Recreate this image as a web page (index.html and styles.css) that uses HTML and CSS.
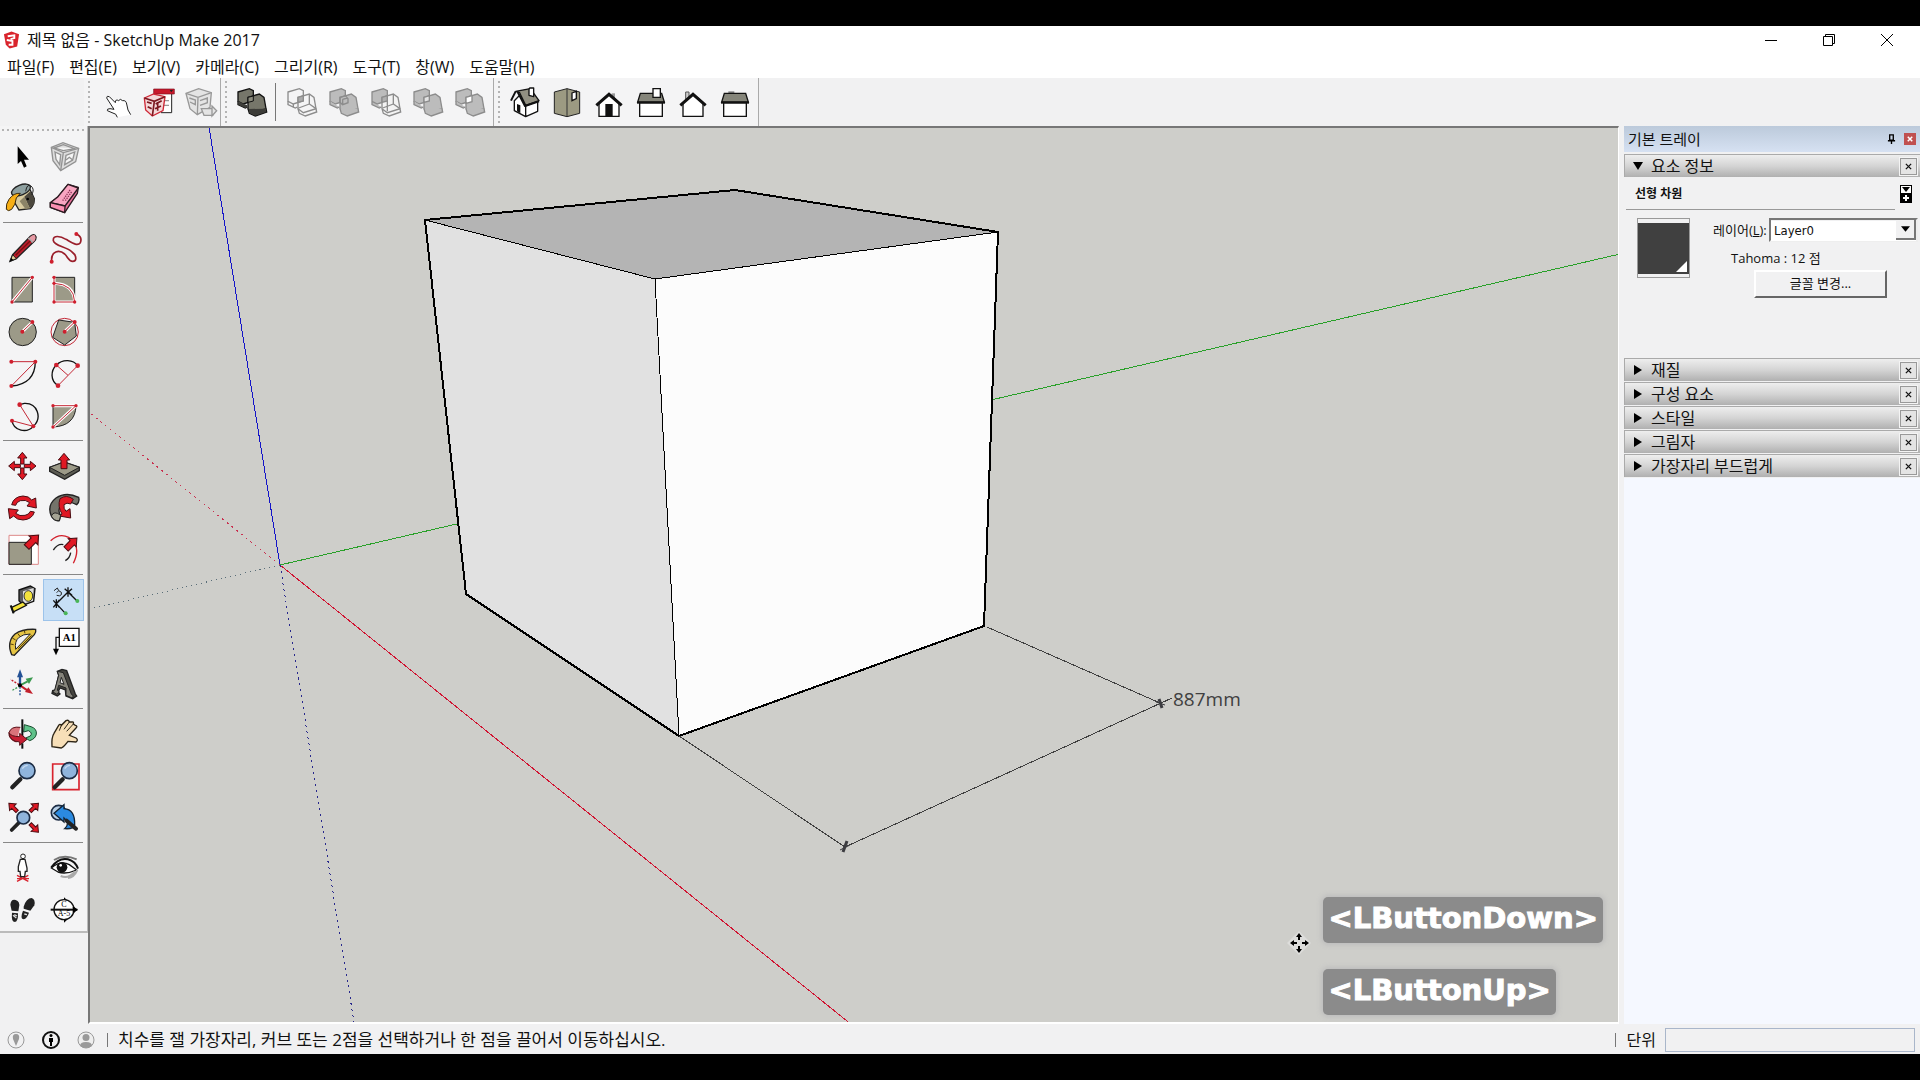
FILE: index.html
```html
<!DOCTYPE html>
<html lang="ko">
<head>
<meta charset="utf-8">
<title>제목 없음 - SketchUp Make 2017</title>
<link rel="stylesheet" href="styles.css">
</head>
<body>
<svg class="defs" aria-hidden="true">
  <defs>
    <path id="arrow-up" d="M0-26 L14-9 H5 V9 H-5 V-9 H-14Z"/>
    <path id="arrow-big" d="M0-28 L17-8 H9 V18 H-9 V-8 H-17Z"/>
    <g id="boxes">
      <path d="M12 24 L46 14 L58 20 V50 L28 60 L12 52Z"/>
      <path d="M12 52 V62 L34 72 L40 69"/>
      <path d="M42 40 L76 30 L90 40 L96 74 L58 86 L42 74Z"/>
      <path d="M42 74 L46 88 L64 96 L98 84 L96 74"/>
    </g>
    <g id="lens"><path class="k" d="M22 88 L46 64" stroke-width="13" stroke-linecap="round"/><circle cx="66" cy="38" r="24" fill="#8fb4dc" stroke="#1c2c44" stroke-width="5"/><path d="M52 32 Q58 22 68 22" stroke="#c5daf0" stroke-width="4" fill="none"/></g>
  </defs>
</svg>
<div class="app">
  <header class="titlebar">
    <svg class="logo" viewBox="0 0 18 20"><path d="M1 4 L9 1 L17 4 L15 17 L7 19 L3 15Z" fill="#d9242c"/><path d="M5 6 L12 5 V8 L8 9 M4 10 L10 11 V15 L6 15" stroke="#fff" stroke-width="2" fill="none"/></svg>
    <h1 class="title">제목 없음 - SketchUp Make 2017</h1>
    <div class="winbtns">
      <button aria-label="최소화"><svg viewBox="0 0 14 14"><path d="M1 7.500H13" /></svg></button>
      <button aria-label="이전 크기로"><svg viewBox="0 0 14 14"><path d="M1.500 3.500H10.500V12.500H1.500Z M3.500 3V1.500H12.500V10.500H11"/></svg></button>
      <button aria-label="닫기"><svg viewBox="0 0 14 14"><path d="M1 1L13 13M13 1L1 13"/></svg></button>
    </div>
  </header>
  <nav class="menubar">
    <button>파일(F)</button><button>편집(E)</button><button>보기(V)</button><button>카메라(C)</button><button>그리기(R)</button><button>도구(T)</button><button>창(W)</button><button>도움말(H)</button>
  </nav>
  <div class="toolbar">
    <div class="group group-narrow">
      <span class="grip"></span>
      <button class="tool" aria-label="상호 작용"><svg viewBox="0 0 108 108"><path d="M52 100 Q50 88 36 86 L22 80 Q20 74 30 74 L42 76 L20 42 Q20 34 28 38 L46 56 Q46 44 56 50 Q60 42 68 50 Q78 48 80 60 L84 78 L92 92" fill="#fff" stroke="#222" stroke-width="3"/></svg></button>
      <button class="tool" aria-label="구성 요소 옵션"><svg viewBox="0 0 108 108"><path d="M48 26H92V86H60" fill="#fff" stroke="#222" stroke-width="3"/><path d="M38 15H100V30H38Z" fill="#c9182b" stroke="#7d1020" stroke-width="2"/><path d="M86 18L96 18L91 25Z" fill="#222"/><path d="M60 50H84M60 64H84" stroke="#999" stroke-width="4"/><path d="M10 42L38 30L72 38L66 80L34 96L14 78Z" fill="#f4d9da" stroke="#cf2736" stroke-width="4"/><path d="M10 42L40 52L72 38M40 52L34 96M18 54L32 58M20 68L32 74M44 60L62 50M42 74L60 66M50 54V80" stroke="#7c1820" stroke-width="5" fill="none"/></svg></button>
      <button class="tool" aria-label="구성 요소 특성"><svg viewBox="0 0 108 108"><g fill="#e4e4e4" stroke="#989898" stroke-width="4"><path d="M12 28L50 14L88 26L84 70L46 92L24 74Z"/><path d="M12 28L48 40L88 26M48 40L46 92M22 42L40 48V62L24 54M54 50L76 42V56L54 64M58 74H92V94H66Z" /><path d="M90 66L104 80L90 96Z"/></g></svg></button>
    </div>
    <div class="group">
      <span class="grip"></span>
      <button class="tool" aria-label="외부 쉘"><svg viewBox="0 0 108 108"><use href="#boxes" fill="#76766a" stroke="#111" stroke-width="4"/><path d="M44 75L94 74L97 84L64 95L47 87ZM13 53L40 64V70L34 72L13 62Z" fill="#3c3c38"/><path d="M42 40L58 36V51L42 55Z" fill="#8a8a7c" stroke="#111" stroke-width="3"/></svg></button>
      <span class="vline"></span>
      <button class="tool gray" aria-label="교차"><svg viewBox="0 0 108 108"><use href="#boxes" fill="none"/><path d="M42 40L58 35V51L42 55Z" fill="#aaa"/><path d="M28 60V70M76 30V60L96 74M76 60L44 72"/></svg></button>
      <button class="tool gray" aria-label="합집합"><svg viewBox="0 0 108 108"><use href="#boxes" fill="#bcbcbc"/><path d="M42 40L58 35L66 44V56L50 62L42 55Z M50 46L64 42M50 46V60"/></svg></button>
      <button class="tool gray" aria-label="빼기"><svg viewBox="0 0 108 108"><path d="M12 24L46 14L58 20V50L28 60L12 52Z M12 52V62L34 72L40 69" fill="#bcbcbc"/><path d="M42 40L76 30L90 40L96 74L58 86L42 74Z M42 74L46 88L64 96L98 84L96 74" fill="#f3f3f3"/><path d="M42 40L58 35V51L42 55Z" fill="#b0b0b0"/><path d="M76 30V60L96 74M76 60L44 72M58 50V82"/></svg></button>
      <button class="tool gray" aria-label="자르기"><svg viewBox="0 0 108 108"><use href="#boxes" fill="#bcbcbc"/><path d="M42 40L58 35V51L42 55Z" fill="#e4e4e4"/></svg></button>
      <button class="tool gray" aria-label="분할"><svg viewBox="0 0 108 108"><use href="#boxes" fill="#bcbcbc"/><path d="M42 40L60 35V53L42 58Z" fill="#fff"/></svg></button>
    </div>
    <div class="group">
      <span class="grip"></span>
      <button class="tool" aria-label="등각 투영"><svg viewBox="0 0 108 108"><g stroke="#111" stroke-width="4" stroke-linejoin="round"><path d="M22 50L38 34L56 66V98L22 80Z M56 66L92 52V82L56 98" fill="#fff"/><path d="M26 22L70 14L96 50L56 64L38 26Z" fill="#929082"/><path d="M26 22L12 50M32 24L54 66L96 52" fill="none" stroke-width="6"/><path d="M66 16V34L80 38V12L68 12Z" fill="#fff"/></g><path d="M30 60L40 64V88L30 82Z" fill="#111"/></svg></button>
      <button class="tool" aria-label="맨 위"><svg viewBox="0 0 108 108"><path d="M16 24L54 14L92 24V88L54 98L16 88Z" fill="#9c9a82" stroke="#222" stroke-width="3"/><path d="M54 14V98" stroke="#333" stroke-width="3"/><path d="M69 27L82 22V44L69 50Z" fill="#fff" stroke="#111" stroke-width="4"/></svg></button>
      <button class="tool" aria-label="앞"><svg viewBox="0 0 108 108"><path d="M62 28L72 28V44H62Z" fill="#999"/><path d="M24 56L54 30L84 56V97H24Z" fill="#fff" stroke="#111" stroke-width="4"/><path d="M16 64L54 31L92 64" stroke="#111" stroke-width="9" fill="none"/><path d="M43 60H65V97H43Z" fill="#111"/></svg></button>
      <button class="tool" aria-label="오른쪽"><svg viewBox="0 0 108 108"><path d="M20 56H88V97H20Z" fill="#fff" stroke="#111" stroke-width="4"/><path d="M22 28H86L94 54H14Z" fill="#85857a" stroke="#111" stroke-width="4"/><path d="M12 56H96" stroke="#111" stroke-width="6"/><path d="M60 14H82V40H60Z" fill="#fff" stroke="#111" stroke-width="4"/></svg></button>
      <button class="tool" aria-label="뒤"><svg viewBox="0 0 108 108"><path d="M32 24H42V46H32Z" fill="#ccc" stroke="#555" stroke-width="3"/><path d="M24 56L54 30L84 56V97H24Z" fill="#fff" stroke="#111" stroke-width="4"/><path d="M16 64L54 31L92 64" stroke="#111" stroke-width="9" fill="none"/></svg></button>
      <button class="tool" aria-label="왼쪽"><svg viewBox="0 0 108 108"><path d="M34 22H52V30H34Z" fill="#888"/><path d="M20 56H88V97H20Z" fill="#fff" stroke="#111" stroke-width="4"/><path d="M22 28H86L94 54H14Z" fill="#85857a" stroke="#111" stroke-width="4"/><path d="M12 56H96" stroke="#111" stroke-width="6"/></svg></button>
    </div>
  </div>
  <main class="main">
    <aside class="side">
      <div class="palette">
        <span class="grip-h"></span>
        <div class="cells">
          <button class="tool" aria-label="선택"><svg viewBox="0 0 108 108"><path d="M38 25V78L48 69L57 89L65 85L57 65H72Z"/></svg></button>
          <button class="tool" aria-label="구성 요소 만들기"><svg viewBox="0 0 108 108"><g fill="none" stroke="#929292" stroke-width="4"><path d="M16 28L51 14L98 31L89 71L44 98L21 68Z" fill="#ddd"/><path d="M16 28L52 44L98 31M52 44L44 98M27 42L44 50L41 80L30 64ZM60 52L86 42L80 66L56 80Z" fill="#f5f5f5"/><path d="M24 30L52 20L86 32L52 38ZM60 66L70 58L80 66" /></g></svg></button>
          <button class="tool" aria-label="페인트통"><svg viewBox="0 0 108 108"><path d="M26 36L70 18L88 56Q88 74 76 86L42 90L28 66Z" fill="#d8cba0" stroke="#222" stroke-width="4"/><path d="M58 50L74 84L88 72V56L76 34Z" fill="#4b473d"/><path d="M44 64L58 50L74 84L62 88Z" fill="#8b8367"/><ellipse cx="48" cy="30" rx="30" ry="15" transform="rotate(-22 48 30)" fill="#8ea0a0" stroke="#222" stroke-width="4"/><path d="M46 40Q26 38 12 58Q2 72 4 88Q10 96 20 88Q32 74 34 54Z" fill="#f7af16" stroke="#3a2a10" stroke-width="3"/><path d="M62 34Q66 10 78 18Q90 28 80 44" fill="none" stroke="#222" stroke-width="3"/><circle cx="68" cy="57" r="4"/></svg></button>
          <button class="tool" aria-label="지우개"><svg viewBox="0 0 108 108"><g stroke="#2b1a20" stroke-width="4" stroke-linejoin="round"><path d="M13 68L36 50L66 13L97 22L94 40L56 98L13 82Z" fill="#e8709a"/><path d="M13 68L57 78L97 24L66 13L36 50Z" fill="#f8a5c1"/><path d="M13 68L57 78L56 98L13 82Z" fill="#fb8fb2"/></g><path d="M50 62L72 30M58 62L78 34" stroke="#8c3456" stroke-width="4" stroke-dasharray="4 3"/></svg></button>
        </div>
        <hr>
        <div class="cells">
          <button class="tool" aria-label="선"><svg viewBox="0 0 108 108"><path d="M15 94L23 74L76 19Q88 8 93 20Q94 28 88 34L34 86Z" fill="#be1e2d" stroke="#222" stroke-width="4"/><path d="M15 94L23 74L34 86Z" fill="#e8d29c" stroke="#222" stroke-width="3"/><path d="M15 94L19 84L25 90Z"/><path d="M70 26L82 38L89 32Q94 24 90 16Q84 12 76 20Z" fill="#e69aa4"/><path d="M70 24L83 37" stroke="#aaa" stroke-width="5"/><path d="M32 76L76 32" stroke="#711" stroke-width="4"/></svg></button>
          <button class="tool" aria-label="자유형"><svg viewBox="0 0 108 108"><path d="M17 95C14 62 40 58 56 72C66 82 68 94 80 94C92 94 94 78 78 66C62 50 24 48 22 32C20 14 44 18 60 28C78 38 94 50 103 38C108 26 104 18 91 12" fill="none" stroke="#9a1f2b" stroke-width="5"/><circle class="r" cx="17" cy="95" r="6"/><circle class="r" cx="91" cy="12" r="6"/></svg></button>
          <button class="tool" aria-label="사각형"><svg viewBox="0 0 108 108"><path class="face" d="M21 16H82V90H21Z"/><path class="halo" d="M21 90L82 16"/><path class="rl" d="M21 90L82 16"/><circle class="r" cx="21" cy="90" r="5"/><circle class="r" cx="82" cy="16" r="5"/></svg></button>
          <button class="tool" aria-label="회전 사각형"><svg viewBox="0 0 108 108"><path class="face" d="M24 16H86V90H24Z"/><path class="halo" d="M24 16V90H86Q84 36 24 34"/><path class="rl" d="M24 16V90H86Q84 36 24 34"/><circle class="r" cx="24" cy="16" r="5"/><circle class="r" cx="24" cy="34" r="5"/><circle class="r" cx="24" cy="90" r="5"/><circle class="r" cx="86" cy="90" r="5"/></svg></button>
          <button class="tool" aria-label="원"><svg viewBox="0 0 108 108"><circle class="face" cx="53" cy="54" r="41"/><path class="halo" d="M52 53L82 24"/><path class="rl" d="M52 53L82 24"/><circle class="r" cx="52" cy="53" r="6"/><circle class="r" cx="82" cy="24" r="6"/></svg></button>
          <button class="tool" aria-label="다각형"><svg viewBox="0 0 108 108"><circle class="rl" cx="56" cy="54" r="41"/><path class="face" d="M86 25L91 66L56 93L20 70L38 18Z"/><path class="halo" d="M56 53L86 24"/><path class="rl" d="M56 53L86 24"/><circle class="r" cx="56" cy="53" r="6"/><circle class="r" cx="86" cy="24" r="6"/></svg></button>
          <button class="tool" aria-label="호"><svg viewBox="0 0 108 108"><path class="kl" d="M91 17Q90 84 19 90"/><path class="rl" d="M19 17H91L19 90"/><circle class="r" cx="19" cy="17" r="6"/><circle class="r" cx="91" cy="17" r="6"/><circle class="r" cx="19" cy="90" r="6"/></svg></button>
          <button class="tool" aria-label="2점 호"><svg viewBox="0 0 108 108"><path class="kl" d="M36 89C12 74 14 44 31 27C50 8 82 10 95 29"/><path class="rl" d="M36 89L95 29M31 27L66 58" stroke-width="5"/><circle class="r" cx="31" cy="27" r="7"/><circle class="r" cx="95" cy="29" r="7"/><circle class="r" cx="36" cy="89" r="7"/></svg></button>
          <button class="tool" aria-label="3점 호"><svg viewBox="0 0 108 108"><path class="kl" d="M21 68C26 100 66 106 85 85C112 60 98 14 58 16L44 20"/><path class="rl" d="M44 20L85 85L21 68" stroke-width="5"/><circle class="r" cx="44" cy="20" r="7"/><circle class="r" cx="21" cy="68" r="6"/><circle class="r" cx="85" cy="85" r="6"/></svg></button>
          <button class="tool" aria-label="파이"><svg viewBox="0 0 108 108"><path class="face" d="M21 23H90Q88 84 21 87Z"/><path class="halo" d="M21 23H90L21 87"/><path class="rl" d="M21 23H90L21 87"/><circle class="r" cx="21" cy="23" r="5"/><circle class="r" cx="90" cy="23" r="5"/><circle class="r" cx="21" cy="87" r="5"/></svg></button>
        </div>
        <hr>
        <div class="cells">
          <button class="tool" aria-label="이동"><svg viewBox="0 0 108 108"><g class="ra"><use href="#arrow-up" transform="translate(52 39)"/><use href="#arrow-up" transform="translate(52 69) rotate(180)"/><use href="#arrow-up" transform="translate(37 54) rotate(-90)"/><use href="#arrow-up" transform="translate(67 54) rotate(90)"/></g></svg></button>
          <button class="tool" aria-label="밀기/끌기"><svg viewBox="0 0 108 108"><path d="M11 58L54 42L100 58V68L56 94L11 70Z" fill="#5b5b52" stroke="#222" stroke-width="4"/><path d="M11 58L54 42L100 58L56 82Z" fill="#9c9a88" stroke="#222" stroke-width="3"/><g class="ra"><use href="#arrow-big" transform="translate(54 44)"/></g></svg></button>
          <button class="tool" aria-label="회전"><svg viewBox="0 0 108 108"><g class="ra"><path d="M20 44Q26 20 54 18Q72 18 80 30L92 24L94 54L66 48L74 38Q62 28 46 32Q34 36 32 46Z"/><path d="M88 66Q82 88 54 90Q36 90 26 78L14 86L10 56L40 60L32 70Q44 80 60 76Q72 74 76 64Z"/></g></svg></button>
          <button class="tool" aria-label="따라가기"><svg viewBox="0 0 108 108"><path d="M98 22Q60 4 30 24Q2 46 16 78Q24 94 40 92L44 76Q34 64 44 46Q62 28 92 44Q102 36 98 22Z" fill="#74736a" stroke="#222" stroke-width="4"/><g class="ra"><path d="M42 26Q62 12 82 28L74 42Q62 36 54 44Q52 56 60 64L72 56L74 84L40 78L48 72Q34 50 42 26Z"/></g><path d="M16 78Q24 60 44 76L40 92Q24 94 16 78Z" fill="#a5a494" stroke="#222" stroke-width="3"/></svg></button>
          <button class="tool" aria-label="배율"><svg viewBox="0 0 108 108"><path d="M12 10H100V97H12Z" fill="#fff" stroke="#d88" stroke-width="3"/><path d="M12 31H79V97H12Z" fill="#9c9a88" stroke="#222" stroke-width="3"/><g class="ra"><use href="#arrow-big" transform="translate(79 31) rotate(45) scale(1.100)"/></g></svg></button>
          <button class="tool" aria-label="오프셋"><svg viewBox="0 0 108 108"><path d="M14 26Q40 2 68 16Q108 40 82 94" fill="none" stroke="#d3202c" stroke-width="4"/><path d="M22 54Q36 34 52 38M74 62Q72 78 58 86" fill="none" stroke="#222" stroke-width="4"/><g class="ra"><use href="#arrow-big" transform="translate(73 38) rotate(45)"/></g></svg></button>
        </div>
        <hr>
        <div class="cells">
          <button class="tool" aria-label="줄자 도구"><svg viewBox="0 0 108 108"><path d="M42 24L76 12L90 20L86 58L54 70L42 56Z" fill="#5c5c5c" stroke="#111" stroke-width="4"/><path d="M54 28L86 18L84 56L54 66Z" fill="#ddd"/><ellipse cx="70" cy="42" rx="13" ry="16" fill="#f4e33c" stroke="#333" stroke-width="3"/><path d="M54 60L20 76L24 90L64 70Z" fill="#f4e33c" stroke="#111" stroke-width="4"/><path d="M17 70L26 94" stroke="#111" stroke-width="6"/></svg></button>
          <button class="tool active" aria-label="치수"><svg viewBox="0 0 108 108"><path d="M31 65L66 30M22 55L40 76M22 76L40 54M31 52V78M56 20L78 40M56 40L78 20M66 16V44M31 65L58 94M66 30L94 58" stroke="#111" stroke-width="4" fill="none"/><path d="M24 26L34 18L38 26L32 32M38 26Q50 30 46 38Q42 44 32 40" stroke="#222" stroke-width="3" fill="none"/><circle cx="59" cy="94" r="6" fill="#49b556"/><circle cx="94" cy="57" r="6" fill="#49b556"/></svg></button>
          <button class="tool" aria-label="각도기"><svg viewBox="0 0 108 108"><path d="M20 92Q4 54 30 30Q52 14 92 16Q94 24 88 32L28 94Z" fill="#e5c443" stroke="#222" stroke-width="4"/><path d="M32 76Q28 52 42 40Q54 30 76 30Z" fill="#f3f3f3" stroke="#222" stroke-width="3"/><path d="M16 60L26 62M22 42L32 48M38 28L44 36M58 20L60 28M40 74L80 34" stroke="#553f08" stroke-width="3"/></svg></button>
          <button class="tool" aria-label="텍스트"><svg viewBox="0 0 108 108"><path d="M40 13H99V67H40Z" fill="#fff" stroke="#111" stroke-width="4"/><path d="M40 40H30V76" fill="none" stroke="#111" stroke-width="4"/><path d="M21 74H39L30 94Z"/><text x="70" y="51" text-anchor="middle" class="t-a1">A1</text></svg></button>
          <button class="tool" aria-label="축"><svg viewBox="0 0 108 108"><path d="M45 56V30" stroke="#245296" stroke-width="7"/><path d="M45 10L54 34H36Z" fill="#245296"/><path d="M45 58L68 46" stroke="#3c9a50" stroke-width="6"/><path d="M84 34L72 54L62 38Z" fill="#3c9a50"/><path d="M45 58L68 74" stroke="#c2202c" stroke-width="6"/><path d="M84 84L60 78L70 64Z" fill="#c2202c"/><path d="M45 62V92" stroke="#245296" stroke-width="4" stroke-dasharray="6 4"/><path d="M45 60L20 74" stroke="#3c9a50" stroke-width="4" stroke-dasharray="6 4"/><path d="M42 56L16 40" stroke="#c2202c" stroke-width="4" stroke-dasharray="6 4"/><circle cx="45" cy="58" r="6"/></svg></button>
          <button class="tool" aria-label="3D 텍스트"><svg viewBox="0 0 108 108"><path d="M34 16L48 10L62 14L88 84L92 90L80 98L60 90L58 72L42 66L36 78L42 84L34 90L18 82L20 74L28 72L38 28Z" fill="#45443f" stroke="#222" stroke-width="4"/><path d="M34 16L52 20L76 84L82 90L78 96L60 88L60 66L38 58L34 72L40 78L32 84L20 78L26 72L38 28Z" fill="#85837a" stroke="#222" stroke-width="3"/><path d="M46 34L42 50L54 55Z" fill="#f3f3f3" stroke="#222" stroke-width="3"/></svg></button>
        </div>
        <hr>
        <div class="cells">
          <button class="tool" aria-label="궤도"><svg viewBox="0 0 108 108"><path d="M46 34Q18 30 12 50Q10 70 34 78" fill="#d9737a" stroke="#5a1119" stroke-width="3"/><path d="M58 26L78 32Q96 38 94 54Q92 68 74 74L62 66L76 60Q84 50 70 44L56 48Z" fill="#5fc28a" stroke="#164a2c" stroke-width="3"/><path d="M52 10V60" stroke="#111" stroke-width="6"/><path d="M12 50Q18 62 44 62V52L66 70L44 88V78Q14 76 12 50Z" fill="#c61f33" stroke="#5a1119" stroke-width="3"/><path d="M52 82V98" stroke="#111" stroke-width="6"/></svg></button>
          <button class="tool" aria-label="이동 보기"><svg viewBox="0 0 108 108"><path d="M18 92Q16 64 24 52L38 28Q42 22 46 28L60 14Q68 10 70 18L78 18Q84 16 82 24L88 28Q96 30 90 36L70 58L90 66Q98 72 90 78L66 76Q54 92 46 96Z" fill="#f7dfb8" stroke="#2c2416" stroke-width="4"/><path d="M46 28L40 44M70 18L54 40M82 24L62 46" stroke="#2c2416" stroke-width="3" fill="none"/></svg></button>
          <button class="tool" aria-label="확대/축소"><svg viewBox="0 0 108 108"><use href="#lens"/></svg></button>
          <button class="tool" aria-label="창 확대/축소"><svg viewBox="0 0 108 108"><path d="M20 18H99V95H20Z" fill="none" stroke="#d8232e" stroke-width="5"/><use href="#lens" x="4"/></svg></button>
          <button class="tool" aria-label="범위 확대/축소"><svg viewBox="0 0 108 108"><g class="ra"><use href="#arrow-up" transform="translate(30 28) rotate(-45)"/><use href="#arrow-up" transform="translate(82 28) rotate(45)"/><use href="#arrow-up" transform="translate(82 78) rotate(135)"/></g><path d="M20 90L42 68" stroke="#222" stroke-width="11" stroke-linecap="round"/><circle cx="55" cy="53" r="19" fill="#8fb4dc" stroke="#1c2c44" stroke-width="5"/></svg></button>
          <button class="tool" aria-label="이전"><svg viewBox="0 0 108 108"><circle cx="38" cy="38" r="22" fill="#b7cfe6" stroke="#1c2c44" stroke-width="5"/><path d="M24 40L54 14V26Q88 28 86 76Q82 88 56 86Q74 70 54 54V66Z" fill="#2b8ae0" stroke="#123" stroke-width="4"/><path d="M62 62L90 86" stroke="#222" stroke-width="12" stroke-linecap="round"/></svg></button>
        </div>
        <hr>
        <div class="cells">
          <button class="tool" aria-label="카메라 배치"><svg viewBox="0 0 108 108"><path d="M36 94L70 76M36 76L70 94M36 86H72" stroke="#d8232e" stroke-width="4"/><circle cx="54" cy="19" r="7" fill="#fff" stroke="#222" stroke-width="3"/><path d="M46 28H60L66 54V64H61L59 80H47L45 64H40V50Z" fill="#fff" stroke="#222" stroke-width="4"/></svg></button>
          <button class="tool" aria-label="둘러보기"><svg viewBox="0 0 108 108"><path d="M16 52Q38 22 66 28Q88 34 96 56" fill="none" stroke="#111" stroke-width="6"/><path d="M24 30Q54 12 92 28" fill="none" stroke="#777" stroke-width="6"/><path d="M16 54Q44 30 70 44L92 60Q60 74 36 66Z" fill="#fff" stroke="#111" stroke-width="4"/><circle cx="48" cy="52" r="16" fill="#111"/><circle cx="44" cy="46" r="4" fill="#fff"/><path d="M44 78Q66 88 86 66M66 84Q84 82 94 60" fill="none" stroke="#aaa" stroke-width="6"/></svg></button>
          <button class="tool" aria-label="보행"><svg viewBox="0 0 108 108"><g fill="#222"><path d="M16 38Q18 20 32 24Q46 28 42 46L40 58L20 56Z"/><path d="M21 62L39 64Q40 88 30 90Q18 90 21 62Z"/><path d="M56 44Q64 18 80 18Q92 22 88 40L76 56L56 50Z"/><path d="M54 56L72 62Q66 80 56 82Q44 80 54 56Z"/></g><path d="M24 70L34 78M28 68L36 72M58 66L66 68" stroke="#ddd" stroke-width="4"/></svg></button>
          <button class="tool" aria-label="단면"><svg viewBox="0 0 108 108"><path d="M54 16L94 53L54 92Z"/><circle cx="54" cy="53" r="30" fill="#fff" stroke="#111" stroke-width="4"/><path d="M14 53H94" stroke="#111" stroke-width="6"/><path d="M80 44L96 53L80 62Z"/><text x="54" y="46" text-anchor="middle" class="t-sec">C</text><text x="54" y="73" text-anchor="middle" class="t-sec">A-5</text></svg></button>
        </div>
      </div>
    </aside>
    <section class="viewport">
      <svg class="scene" viewBox="90 128 1528 894" preserveAspectRatio="xMidYMid slice">
        <g shape-rendering="crispEdges" fill="none">
          <path d="M209 127L280 565" stroke="#1414c8"/>
          <path d="M280 565L1620 254" stroke="#28a028"/>
          <path d="M280 565L852 1025" stroke="#d01432"/>
          <path d="M280 565L90 413" stroke="#c83250" stroke-dasharray="2 4"/>
          <path d="M280 565L90 609" stroke="#5a6e78" stroke-dasharray="1 4"/>
          <path d="M280 565L354 1022" stroke="#28288c" stroke-dasharray="2 4"/>
          <path d="M425 220L655 279L679 736L465 594Z" fill="#e1e1e1"/>
          <path d="M655 279L998 232L983 626L679 736Z" fill="#fcfcfc"/>
          <path d="M425 220L735 190L998 232L655 279Z" fill="#b4b4b4"/>
          <path d="M425 220L655 279L998 232M655 279L679 736" stroke="#000"/>
          <path d="M425 220L735 190L998 232L984 626L679 736L466 594Z" stroke="#000" stroke-width="2" stroke-linejoin="round"/>
          <path d="M987 627L1160 703M1172 698L845 847L679 736" stroke="#404040"/>
        </g>
        <path d="M1159 699L1162 708M847 841L843 852" stroke="#3c3c40" stroke-width="3"/>
        <path d="M1156 702L1165 705M840 850L850 845" stroke="#3c3c40" stroke-width="1"/>
        <text x="1173" y="706" class="dim">887mm</text>
        <g><path d="M1299 931L1311 943L1299 955L1287 943Z" fill="#f4f4f4" opacity=".4"/><path d="M1299 933L1302 937H1300V940H1298V937H1296ZM1299 953L1302 949H1300V946H1298V949H1296ZM1290 943L1294 940V942H1297V944H1294V946ZM1309 943L1305 940V942H1302V944H1305V946Z"/></g>
      </svg>
      <div class="keys"><kbd>&lt;LButtonDown&gt;</kbd><kbd>&lt;LButtonUp&gt;</kbd></div>
    </section>
    <aside class="tray">
      <div class="tray-head"><h2>기본 트레이</h2>
        <button class="pin" aria-label="고정"><svg viewBox="0 0 10 12"><path d="M3 1H7V7H3ZM1 7.500H9M5 8V12M7 1V7" fill="none" stroke="#000" stroke-width="1.500"/></svg></button>
        <button class="close-red" aria-label="트레이 닫기"><svg viewBox="0 0 8 8"><path d="M1 1L7 7M7 1L1 7" stroke="#fff" stroke-width="2"/></svg></button>
      </div>
      <div class="sec"><svg class="tri" viewBox="0 0 10 10"><path d="M0 1H10L5 9Z"/></svg><h3>요소 정보</h3><button class="x" aria-label="닫기"><svg viewBox="0 0 8 8"><path d="M1 1L7 7M7 1L1 7"/></svg></button></div>
      <div class="info">
        <div class="info-head"><h4>선형 차원</h4><button class="detail" aria-label="세부 정보"><svg viewBox="0 0 12 18"><path d="M0 0H12V18H0Z"/><path d="M1 1H11V8H1Z" fill="#fff"/><path d="M2 2H10L6 7Z"/><path d="M6 10V16M3 13H9" stroke="#fff" stroke-width="2"/></svg></button></div>
        <div class="info-body">
          <button class="swatch" aria-label="재질"><svg viewBox="0 0 51 51"><path d="M0 0H51V51H0Z" fill="#404040"/><path d="M49 38V49H38Z" fill="#fff"/></svg></button>
          <div class="fields">
            <div class="layer"><label for="layer">레이어(<u>L</u>):</label>
              <div class="combo"><select id="layer"><option>Layer0</option></select><span class="drop"><svg viewBox="0 0 10 6"><path d="M0 0H10L5 6Z"/></svg></span></div></div>
            <p class="font">Tahoma : 12 점</p>
            <button class="change">글꼴 변경...</button>
          </div>
        </div>
      </div>
      <div class="sec"><svg class="tri" viewBox="0 0 10 10"><path d="M1 0V10L9 5Z"/></svg><h3>재질</h3><button class="x" aria-label="닫기"><svg viewBox="0 0 8 8"><path d="M1 1L7 7M7 1L1 7"/></svg></button></div>
      <div class="sec"><svg class="tri" viewBox="0 0 10 10"><path d="M1 0V10L9 5Z"/></svg><h3>구성 요소</h3><button class="x" aria-label="닫기"><svg viewBox="0 0 8 8"><path d="M1 1L7 7M7 1L1 7"/></svg></button></div>
      <div class="sec"><svg class="tri" viewBox="0 0 10 10"><path d="M1 0V10L9 5Z"/></svg><h3>스타일</h3><button class="x" aria-label="닫기"><svg viewBox="0 0 8 8"><path d="M1 1L7 7M7 1L1 7"/></svg></button></div>
      <div class="sec"><svg class="tri" viewBox="0 0 10 10"><path d="M1 0V10L9 5Z"/></svg><h3>그림자</h3><button class="x" aria-label="닫기"><svg viewBox="0 0 8 8"><path d="M1 1L7 7M7 1L1 7"/></svg></button></div>
      <div class="sec"><svg class="tri" viewBox="0 0 10 10"><path d="M1 0V10L9 5Z"/></svg><h3>가장자리 부드럽게</h3><button class="x" aria-label="닫기"><svg viewBox="0 0 8 8"><path d="M1 1L7 7M7 1L1 7"/></svg></button></div>
      <div class="tray-rest"></div>
    </aside>
  </main>
  <footer class="status">
    <button aria-label="지리적 위치"><svg viewBox="0 0 18 18"><circle cx="9" cy="9" r="8" fill="none" stroke="#999"/><path d="M9 15L6 8Q5 3 9 3Q13 3 12 8Z" fill="#999"/></svg></button>
    <button aria-label="크레딧"><svg viewBox="0 0 18 18"><circle cx="9" cy="9" r="8" fill="none" stroke="#111" stroke-width="2"/><circle cx="9" cy="4.500" r="1.500"/><path d="M7 7H11V11H10V15H8V11H7Z"/></svg></button>
    <button aria-label="로그인"><svg viewBox="0 0 18 18"><circle cx="9" cy="9" r="8" fill="#eee" stroke="#999"/><circle cx="9" cy="6.500" r="3.500" fill="#999"/><path d="M3 15Q3 11 9 11Q15 11 15 15Q9 19 3 15Z" fill="#999"/></svg></button>
    <span class="bar"></span>
    <p class="hint">치수를 잴 가장자리, 커브 또는 2점을 선택하거나 한 점을 끌어서 이동하십시오.</p>
    <span class="bar"></span>
    <label for="unit">단위</label>
    <input id="unit" type="text">
  </footer>
</div>
</body>
</html>
```
FILE: styles.css
```css
* { box-sizing: border-box; }
body {
  margin: 0;
  min-height: 100vh;
  padding: 26px 0;
  display: flex;
  background: #000;
  color: #111;
  font: 16px/20px "Open Sans", "Noto Sans CJK KR", sans-serif;
}
h1, h2, h3, h4, p { margin: 0; font-weight: 400; font-size: 16px; }
button { border: 0; padding: 0; background: none; font: inherit; color: inherit; }
svg { display: block; }
.defs { position: absolute; width: 0; height: 0; }
.app { flex: 1; min-width: 0; display: flex; flex-direction: column; background: #f1f1f2; }

.titlebar { height: 28px; display: flex; align-items: center; background: #fff; padding-left: 3px; }
.logo { width: 17px; height: 20px; margin-right: 7px; }
.title { flex: 1; font-size: 16px; }
.winbtns { display: flex; padding-right: 4px; }
.winbtns button { width: 58px; height: 28px; display: grid; place-items: center; }
.winbtns svg { width: 14px; height: 14px; fill: none; stroke: #000; }

.menubar { height: 24px; display: flex; align-items: flex-end; gap: 15px; padding-left: 7px; background: #fff; font-size: 16px; }
.menubar button { line-height: 22px; white-space: nowrap; }

.toolbar { height: 48px; display: flex; padding-left: 84px; background: #f1f1f2; }
.group { display: flex; align-items: center; border-right: 1px solid #aaa; padding-right: 2px; background: #f4f4f5; }
.group-narrow { padding-right: 0; }
.grip { width: 2px; height: 42px; margin: 0 4px; background: repeating-linear-gradient(#b4b4b4 0 2px, transparent 2px 5px); }
.group-narrow .grip { margin-right: 7px; }
.tool { width: 42px; height: 42px; display: grid; place-items: center; }
.group-narrow .tool { width: 41px; }
.tool svg { width: 36px; height: 36px; }
.vline { width: 1px; height: 38px; margin: 0 5px 0 2px; background: #777; }
.gray svg { fill: none; stroke: #8c8c8c; stroke-width: 4px; }

.main { flex: 1; min-height: 0; display: flex; }
.side { width: 88px; flex: none; }
.palette { padding: 3px 3px 0 2px; border-right: 1px solid #bbb; border-bottom: 2px solid #bbb; background: #f4f4f5; }
.grip-h { display: block; height: 2px; margin-bottom: 4px; background: repeating-linear-gradient(90deg, #b4b4b4 0 2px, transparent 2px 5px); }
.cells { display: grid; grid-template-columns: 41px 41px; }
.cells .tool { width: 41px; }
.palette hr { height: 1px; margin: 3px 1px 4px; border: 0; background: #888; }
.active { background: #c7dff6; border: 1px solid #9cc3ea; }
.k { stroke: #222; }
.r { fill: #cf1f2e; }
.rl { fill: none; stroke: #c42836; stroke-width: 3px; }
.kl { fill: none; stroke: #111; stroke-width: 4px; }
.halo { fill: none; stroke: #fff; stroke-width: 9px; }
.face { fill: #9c9a88; stroke: #222; stroke-width: 3px; }
.ra { fill: #e01824; stroke: #4a0d12; stroke-width: 3px; }
.t-a1 { font: 700 32px "Liberation Serif", serif; }
.t-sec { font: 24px "Liberation Serif", serif; }

.viewport {
  flex: 1; min-width: 0; position: relative; overflow: hidden;
  background: #cececa;
  border-style: solid; border-width: 2px 1px 2px 2px;
  border-color: #777 #fff #fff #777;
}
.scene { position: absolute; inset: 0; width: 100%; height: 100%; }
.dim { font: 19px "Open Sans", sans-serif; fill: #404040; }
.keys { position: absolute; right: 15px; bottom: 7px; display: flex; flex-direction: column; align-items: flex-start; gap: 26px; }
.keys kbd {
  height: 46px; padding: 0 5px; border-radius: 5px;
  background: #8b8b8b; color: #fff; box-shadow: 0 0 5px 2px #bdbdbd;
  font: 700 29px/43px "DejaVu Sans", sans-serif;
  -webkit-text-stroke: 1px #fff;
}

.tray { width: 296px; flex: none; margin-left: 5px; display: flex; flex-direction: column; }
.tray-head { height: 26px; margin-bottom: 2px; display: flex; align-items: center; padding: 0 4px 0 4px; background: linear-gradient(#bccadb, #d6e1f2); }
.tray-head h2 { flex: 1; font-size: 15px; }
.pin { width: 9px; margin-right: 8px; }
.close-red { width: 12px; height: 12px; display: grid; place-items: center; background: #c0504f; }
.close-red svg { width: 6px; height: 6px; }
.sec {
  height: 23px; margin-bottom: 1px; display: flex; align-items: center; padding: 0 3px 0 8px;
  border-top: 1px solid #aaa; border-left: 1px solid #aaa;
  background: linear-gradient(#eee, #d4d4d4 50%, #b0b0b0);
}
.sec h3 { flex: 1; margin-left: 8px; line-height: 20px; }
.tri { width: 10px; height: 10px; }
.x { width: 17px; height: 17px; display: grid; place-items: center; border: 1px solid #999; outline: 1px solid #f4f4f4; background: #e4e4e4; }
.x svg { width: 7px; height: 7px; stroke: #111; stroke-width: 1.5px; }
.info { height: 180px; padding: 0 2px; }
.info-head { height: 32px; display: flex; align-items: center; justify-content: space-between; padding: 0 6px 0 9px; border-bottom: 1px solid transparent; border-image: linear-gradient(90deg, #999 92%, transparent 92%) 1; }
.info-head h4 { font-size: 12px; font-weight: 700; }
.detail svg { width: 12px; height: 18px; }
.info-body { display: flex; padding: 8px 0 0 11px; }
.swatch { width: 53px; height: 60px; display: grid; place-items: center; border: 1px solid #999; }
.swatch svg { width: 51px; height: 51px; }
.fields { flex: 1; padding-left: 23px; font-size: 13px; }
.layer { display: flex; align-items: center; justify-content: space-between; height: 24px; }
.combo { width: 149px; height: 24px; position: relative; border: 2px solid #777; border-color: #777 #eee #eee #777; }
.combo select { appearance: none; width: 100%; height: 20px; padding: 0 3px; border: 0; border-radius: 0; background: #fff; color: #111; font: 13px/20px "DejaVu Sans Condensed", "Noto Sans", sans-serif; }
.drop { position: absolute; top: 0; right: 0; width: 20px; height: 20px; display: grid; place-items: center; background: #f1f1f2; border: 1px solid #777; border-width: 0 2px 2px 0; pointer-events: none; }
.drop svg { width: 9px; height: 6px; }
.font { margin: 6px 0 2px 18px; font-size: 13px; }
.change { display: block; width: 133px; height: 28px; margin-left: 41px; padding-bottom: 2px; border: 2px solid #666; border-color: #fff #666 #666 #fff; }
.tray-rest { flex: 1; background: #f5f8ff; }

.status { height: 30px; display: flex; align-items: center; padding: 2px 5px 0 7px; }
.status svg { width: 18px; height: 18px; }
.status button { margin-right: 17px; }
.bar { width: 1px; height: 14px; background: #777; }
.status button + .bar { margin-left: -5px; }
.hint { flex: 1; margin-left: 10px; font-size: 17px; white-space: nowrap; }
.status label { margin: 0 9px 0 11px; }
.status input { width: 250px; height: 24px; border: 1px solid #a9b6ca; background: #f1f1f2; }
```
